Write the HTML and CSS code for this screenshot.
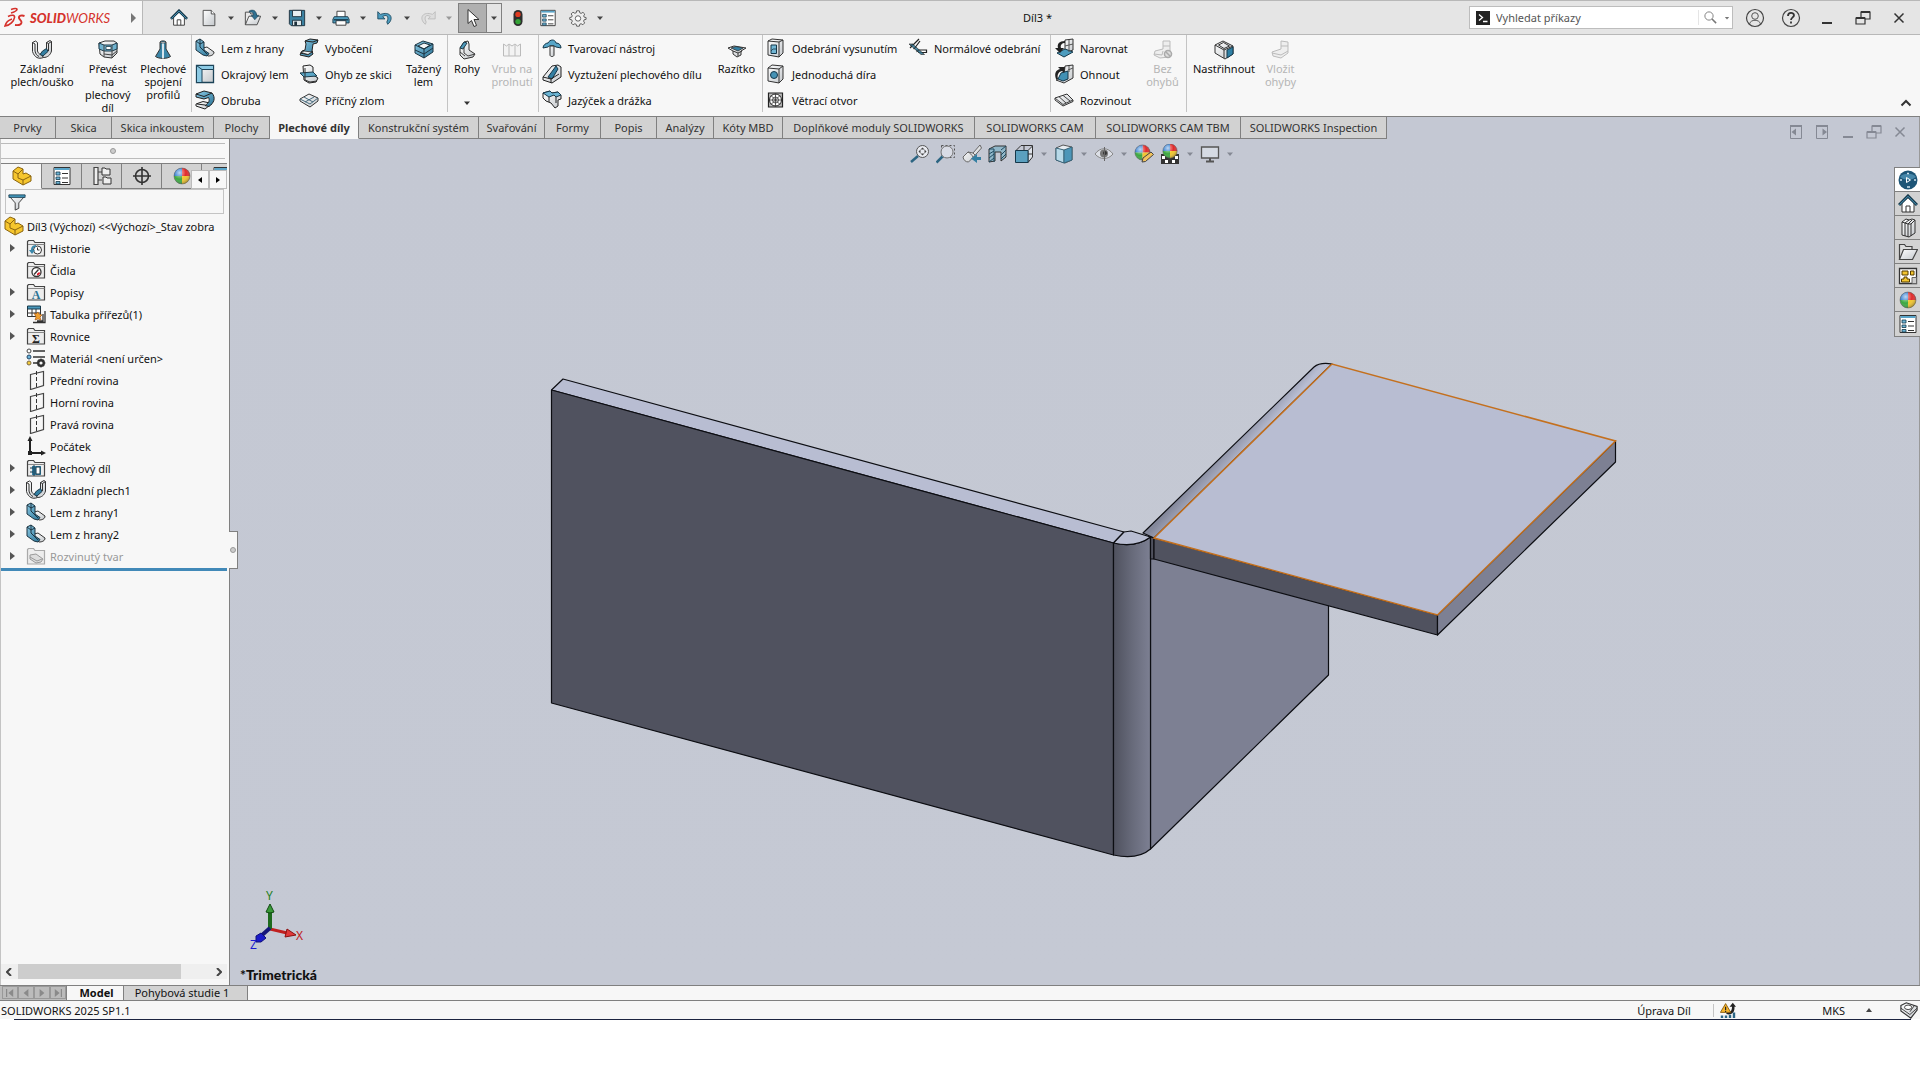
FILE: index.html
```html
<!DOCTYPE html>
<html lang="cs">
<head>
<meta charset="utf-8">
<title>SOLIDWORKS – Díl3</title>
<link rel="stylesheet" href="styles.css">
</head>
<body>
<svg class="defs" aria-hidden="true">
  <defs>
    <linearGradient id="g-teal" x1="0" y1="0" x2="1" y2="1"><stop offset="0" stop-color="#8ccbe6"/><stop offset="1" stop-color="#2a7396"/></linearGradient>
    <linearGradient id="g-grey" x1="0" y1="0" x2="1" y2="1"><stop offset="0" stop-color="#fff"/><stop offset="1" stop-color="#c4c8cc"/></linearGradient>
    <linearGradient id="g-cyl" x1="0" x2="1"><stop offset="0" stop-color="#4f515e"/><stop offset=".5" stop-color="#676a7a"/><stop offset="1" stop-color="#7d8093"/></linearGradient>
    <linearGradient id="g-bend" gradientUnits="userSpaceOnUse" x1="1226" y1="444" x2="1242" y2="458"><stop offset="0" stop-color="#83879a"/><stop offset="1" stop-color="#b8bdd2"/></linearGradient>
    <radialGradient id="g-ball" cx=".35" cy=".3" r=".8"><stop offset="0" stop-color="#fff" stop-opacity=".7"/><stop offset=".5" stop-color="#fff" stop-opacity="0"/><stop offset="1" stop-color="#000" stop-opacity=".45"/></radialGradient>
  </defs>
  <symbol id="i-arrow" viewBox="0 0 14 14"><path d="M4 5.500h6L7 9z" fill="currentColor"/></symbol>
  <symbol id="i-home" viewBox="0 0 20 20"><path d="M4 9v9h12V9l-6-5.500z" fill="#fff" stroke="#333"/><path d="M1 11l9-9 9 9" fill="none" stroke="#16384a" stroke-width="3"/><path d="M1.500 10.800l8.500-8.500 8.500 8.500" fill="none" stroke="#4d9cc0" stroke-width="1"/><path d="M8 18v-6h4v6" fill="none" stroke="#333"/></symbol>
  <symbol id="i-new" viewBox="0 0 20 20"><path d="M3.500 1.500h9l4 4v13h-13z" fill="url(#g-grey)" stroke="#444"/><path d="M12.500 1.500v4h4" fill="#fff" stroke="#444"/></symbol>
  <symbol id="i-open" viewBox="0 0 20 20"><path d="M1.500 17.500v-14h5l1 2h6v3" fill="#e8e8e8" stroke="#444"/><path d="M1.500 17.500l4-9.500h13l-4 9.500z" fill="url(#g-grey)" stroke="#444"/><path d="M6 2c4-2 8 0 8 5h2.500L12 12 8 7h2.500C10.500 4 9 3 6 3.500z" fill="#2f7090" stroke="#16384a" stroke-width=".6"/></symbol>
  <symbol id="i-save" viewBox="0 0 20 20"><path d="M1.500 1.500h17v17h-15l-2-2z" fill="#3b81a1" stroke="#1d2f3a"/><path d="M5 1.500h10v7H5z" fill="#e8eef1" stroke="#1d2f3a"/><path d="M5 12.500h10v6H5z" fill="#dfe7ea" stroke="#1d2f3a"/><path d="M7 14h3v4.500H7z" fill="#1d2f3a"/></symbol>
  <symbol id="i-print" viewBox="0 0 20 20"><path d="M5.500 9V2.500h9V9" fill="#fff" stroke="#333"/><path d="M2.500 8.500h15l1.500 3v4H1v-4z" fill="#4e9cbd" stroke="#1d3a4a"/><path d="M4.500 13h11v5h-11z" fill="#fff" stroke="#333"/><path d="M2 12h16" stroke="#16384a" stroke-width="1.500"/></symbol>
  <symbol id="i-undo" viewBox="0 0 20 20"><path d="M2 3v8h8L7.500 8.500C11 5.500 15.500 8 12 14.500l1 2.500c8-7 2.500-15-8-11z" fill="#4d9dc0" stroke="#1d4a60"/></symbol>
  <symbol id="i-redo" viewBox="0 0 20 20"><path d="M18 3v8h-8l2.500-2.500C9 5.500 4.500 8 8 14.500L7 17C-1 10 4.500 2 15 6z" fill="#ddd" stroke="#bbb"/></symbol>
  <symbol id="i-cursor" viewBox="0 0 20 20"><path d="M5 1.500v14l3.500-3 2.500 6 2.500-1-2.500-6h5z" fill="#fff" stroke="#333"/></symbol>
  <symbol id="i-traffic" viewBox="0 0 20 20"><rect x="5" y="1" width="10" height="18" rx="5" fill="#2e2e2e"/><circle cx="10" cy="6" r="3" fill="#e03a20"/><circle cx="10" cy="14" r="3" fill="#34a336"/></symbol>
  <symbol id="i-list" viewBox="0 0 20 20"><path d="M2 1.500h16v17H2z" fill="#fff" stroke="#333"/><path d="M2.500 2h15v2h-15z" fill="#5aa5c9"/><path d="M4 6h4v3H4zm0 5h4v2.500H4zm0 4.500h4V18H4z" fill="#6db5d6" stroke="#16384a" stroke-width=".8"/><path d="M10 7.500h6M10 12h6M10 16.500h6" stroke="#333"/></symbol>
  <symbol id="i-gear" viewBox="0 0 20 20"><path d="M8.500 2h3l.5 2.300 1.500.6 2-1.200 2 2-1.200 2 .6 1.400L19 9.500v2l-2.200.5-.6 1.500 1.200 2-2 2-2-1.200-1.400.6-.5 2.200h-3L8 17l-1.500-.6-2 1.200-2-2 1.200-2L3 12l-2.200-.5v-2L3 9l.6-1.500-1.200-2 2-2 2 1.200L8 4.300z" fill="#eee" stroke="#555"/><circle cx="10" cy="10.500" r="3" fill="#fff" stroke="#555"/></symbol>
  <symbol id="i-search" viewBox="0 0 20 20"><circle cx="8" cy="8" r="5.500" fill="none" stroke="#777" stroke-width="1.200"/><path d="M12 12l5.500 5.500" stroke="#777" stroke-width="2"/></symbol>
  <symbol id="i-prompt" viewBox="0 0 14 14"><path d="M0 0h14v14H0z" fill="#222"/><path d="M3 3.500l3.500 3L3 9.500M7 10.500h4.500" fill="none" stroke="#fff" stroke-width="1.300"/></symbol>
  <symbol id="i-user" viewBox="0 0 20 20"><circle cx="10" cy="10" r="8.500" fill="none" stroke="#444" stroke-width="1.200"/><circle cx="10" cy="8" r="3.300" fill="none" stroke="#555"/><path d="M4.500 16c1-5 10-5 11 0" fill="none" stroke="#555"/></symbol>
  <symbol id="i-help" viewBox="0 0 20 20"><circle cx="10" cy="10" r="8.500" fill="none" stroke="#444" stroke-width="1.200"/><path d="M7 8c0-4 6-4 6-.7 0 2-3 2.200-3 4.700M10 13.500v2" fill="none" stroke="#333" stroke-width="1.800"/></symbol>
  <symbol id="i-min" viewBox="0 0 20 20"><path d="M5 15h10" stroke="currentColor" stroke-width="2"/></symbol>
  <symbol id="i-restore" viewBox="0 0 20 20"><path d="M8 9V4h9v7h-5M3 10h9v6H3z" fill="none" stroke="currentColor" stroke-width="1.200"/><path d="M8 4h9M3 10h9" stroke="currentColor" stroke-width="2"/></symbol>
  <symbol id="i-close" viewBox="0 0 20 20"><path d="M5.500 5.500l9 9m0-9l-9 9" stroke="currentColor" stroke-width="1.500"/></symbol>
  <symbol id="i-dockl" viewBox="0 0 20 20"><path d="M4.500 3.500h11v13h-11z" fill="none" stroke="currentColor"/><path d="M4 3h12v2H4zM10 6.500v7L5.500 10z" fill="currentColor"/></symbol>
  <symbol id="i-dockr" viewBox="0 0 20 20"><path d="M4.500 3.500h11v13h-11z" fill="none" stroke="currentColor"/><path d="M4 3h12v2H4zM10.500 6.500v7L15 10z" fill="currentColor"/></symbol>
  <!-- sheet metal commands -->
  <symbol id="i-base" viewBox="0 0 20 20"><path d="M.5 2.500L3.500 1l2 1.500v8.500c1 3 2.500 3.500 4 3l2 3.500c-5 2-9 0-11-6z" fill="url(#g-grey)" stroke="#333"/><path d="M14.500 2.500L18 .5l1.500 1V11c-1 4-4 6.500-8 6.500L10 15c2.500-1 4-2 4.500-4z" fill="url(#g-grey)" stroke="#333"/><path d="M.5 2.500L3 4v7c.6 3 2 4.500 4 5.500M16.500 3.500V11M14.500 2.500l2 1 3-2" fill="none" stroke="#333"/><path d="M10.500 11l4-2.500 1.500 3-5 4.500-3-1.500z" fill="#347fa2" stroke="#1c3a4a"/></symbol>
  <symbol id="i-convert" viewBox="0 0 20 20"><path d="M1 3l6-2h9l3 2v10l-5 5-8-1-4-3z" fill="url(#g-grey)" stroke="#333"/><path d="M1 3l5 2h8l5-2v6l-5 2H6l-5-2z" fill="#6fb2cf" stroke="#1c3a4a"/><path d="M8 6.500h5v3H8z" fill="#fff" stroke="#1c3a4a" stroke-width=".8"/><path d="M6 5v12M14 5v13M6 14l8 1 5-4" fill="none" stroke="#444"/></symbol>
  <symbol id="i-loft" viewBox="0 0 20 20"><path d="M7 2c1-1.500 5-1.500 6 0v7l4.500 7.500c-3 2.500-12 2.500-15 0L7 9z" fill="#3c86a8" stroke="#333"/><path d="M7 2c1 1.500 5 1.500 6 0" fill="#eee" stroke="#333" stroke-width=".8"/><path d="M10 3.500v15" stroke="#d8e6ee" stroke-width="2"/></symbol>
  <symbol id="i-edge" viewBox="0 0 20 20"><path d="M8 10l4-1 7 5c0 3-3 4-6 4l-5-4z" fill="url(#g-grey)" stroke="#333"/><path d="M1 3l4-2 4 3v8l5 3.500-2 2.500-4-1-7-5z" fill="url(#g-teal)" stroke="#1c3340"/><path d="M5 1v8l7 7M1 3l4 3 4-2" fill="none" stroke="#1c3340"/></symbol>
  <symbol id="i-miter" viewBox="0 0 20 20"><path d="M1.500 1.500h17v17h-17z" fill="url(#g-grey)" stroke="#1c4358" stroke-width="1.300"/><path d="M1.500 1.500h17v4H7v13H1.500z" fill="#8ccae4" stroke="#1c4358"/><path d="M1.500 1.500L7 5.500" stroke="#1c4358"/></symbol>
  <symbol id="i-hem" viewBox="0 0 20 20"><path d="M1 14l7-2.500 9 2-7 5.500-9-3z" fill="url(#g-grey)" stroke="#222"/><path d="M1 4l8-3 8 2c4 5 2 10-3 13.500l-4-1c4-2.500 5-5 3.500-8L9 9 1 7z" fill="url(#g-teal)" stroke="#222"/><path d="M1 4l8 2.500 8-3.500M10 15l-8-1" fill="none" stroke="#222"/></symbol>
  <symbol id="i-jog" viewBox="0 0 20 20"><path d="M6 3l5-2 8 1-1 3-4 1-1 7 1 3-4 3-9-2 2-4 3-1 1-6z" fill="url(#g-teal)" stroke="#222"/><path d="M6 3l8 1 5-2M1 15l8 1.500 5-3.500" fill="none" stroke="#222"/><path d="M2 14.500l3-1.500 8 1-4 2.500z" fill="#f0f2f3" stroke="#222" stroke-width=".8"/></symbol>
  <symbol id="i-sketched" viewBox="0 0 20 20"><path d="M4 2l7-1 3 2v8l5 3-2 4-7 1-5-3z" fill="url(#g-grey)" stroke="#222"/><path d="M1 9l13-1 4 4-13 1z" fill="#5ba6c6" stroke="#1c3a4a"/><path d="M6 4v12l5 2 7-1" fill="none" stroke="#333"/></symbol>
  <symbol id="i-cross" viewBox="0 0 20 20"><path d="M1 9l9-5 9 4v3l-8 6-10-6z" fill="url(#g-grey)" stroke="#333"/><path d="M1 9l10 5 8-6M5 7l9 5M15 7l-9 5" fill="none" stroke="#476b7d"/></symbol>
  <symbol id="i-swept" viewBox="0 0 20 20"><path d="M1 5l8-4 10 3v8l-9 6-9-5z" fill="url(#g-teal)" stroke="#1c3340"/><path d="M4 6l6-3 6 2-6 4z" fill="#f4f6f7" stroke="#1c3340"/><path d="M1 5l9 4 9-5M10 9v9M1 10l9 4 9-6" fill="none" stroke="#1c3340"/></symbol>
  <symbol id="i-corner" viewBox="0 0 20 20"><path d="M3 8l4-6 4-1 1 3v6l6 4-2 3-9 2-4-4z" fill="url(#g-grey)" stroke="#333"/><path d="M3 8l4-6 3 1-4 6z" fill="#4c99bb" stroke="#1c3a4a"/><path d="M7 7v6l4 3 7-2M3 12l5 4" fill="none" stroke="#444"/></symbol>
  <symbol id="i-notch" viewBox="0 0 20 20"><path d="M1.500 4l3 2 2.500-2 3 2 3-2 2.500 2 3-2v12h-17zM7 5v11M13 5v11" fill="#f3f3f3" stroke="#bbb"/></symbol>
  <symbol id="i-form" viewBox="0 0 20 20"><path d="M1 10c0-3 3-5 5-5 2-4 7-4 8 0 3 0 5 2 5 5l-5-1c-3-2-6-2-8 0z" fill="#58a6c8" stroke="#16384a"/><path d="M8 8h4v9c0 2-4 2-4 0z" fill="url(#g-grey)" stroke="#333"/></symbol>
  <symbol id="i-gusset" viewBox="0 0 20 20"><path d="M1 13l9-11 6-1 3 2v10l-9 6-9-3z" fill="url(#g-grey)" stroke="#222"/><path d="M6 13L14 2l2 3-6 10z" fill="#347fa2" stroke="#16384a"/><path d="M1 13l8 2 8-5M9 15v4" fill="none" stroke="#222"/></symbol>
  <symbol id="i-tab" viewBox="0 0 20 20"><path d="M1 3l7-2 2 2 6-1 3 3v4l-3 1v6l-3 2-4-5-5-2-3-3z" fill="url(#g-grey)" stroke="#222"/><path d="M1 3l7-2 2 2 6-1 3 3-5 2-2-2-5 2z" fill="#6bb4d3" stroke="#16384a"/><path d="M7 7v5M14 7v6" stroke="#222"/></symbol>
  <symbol id="i-stamp" viewBox="0 0 20 20"><path d="M1 8l6-2 12 2-5 3v4l-4 2-4-3v-3z" fill="url(#g-grey)" stroke="#333"/><path d="M4 8l5-1.500 7 1.500-5 3z" fill="#347fa2" stroke="#333" stroke-width=".8"/><path d="M6 11l5 2 4-2M11 13v3" fill="none" stroke="#333"/></symbol>
  <symbol id="i-cut" viewBox="0 0 20 20"><path d="M2 3l4-2 11 1v13l-4 4-11-2z" fill="url(#g-grey)" stroke="#333"/><path d="M2 3l11 1v15M13 4l4-2" fill="none" stroke="#333"/><path d="M5 7h5.500v8.500H5z" fill="#71b6d4" stroke="#16384a"/><path d="M5 13l2-2h3.500" fill="none" stroke="#16384a" stroke-width=".8"/></symbol>
  <symbol id="i-hole" viewBox="0 0 20 20"><path d="M2 4l4-3 11 1v13l-4 4-11-2z" fill="url(#g-grey)" stroke="#333"/><path d="M2 4l11 1v14M13 5l4-3" fill="none" stroke="#333"/><circle cx="8" cy="11" r="3.500" fill="#4592b5" stroke="#16384a"/></symbol>
  <symbol id="i-vent" viewBox="0 0 20 20"><path d="M2.500 3h14v14h-14z" fill="#bbb" stroke="#222" stroke-width="1.200"/><circle cx="9.500" cy="10" r="6" fill="#fff" stroke="#222"/><circle cx="9.500" cy="10" r="3" fill="none" stroke="#333" stroke-width=".8"/><path d="M9.500 3.500v13M3 10h13M5 5.500l9 9M14 5.500l-9 9" stroke="#333" stroke-width=".8"/></symbol>
  <symbol id="i-normal" viewBox="0 0 20 20"><path d="M2 10L11 1M6 11l6-8M9 12h9.500v2.500H11z" fill="#fff" stroke="#222" stroke-width="1.200"/><path d="M1 6h3.500l12 10.500H13z" fill="#2f7594" opacity=".85"/><path d="M1 6h3.500l12 10.500H13zM5 6l-3 2M8 9l-3 2M11 12l-3 2" fill="none" stroke="#222" stroke-width=".6"/></symbol>
  <symbol id="i-unfold" viewBox="0 0 20 20"><path d="M11 2l8-1v11l-8 3z" fill="url(#g-grey)" stroke="#333"/><path d="M3 15l8-4 8 3-9 5z" fill="#4d9cbe" stroke="#16384a"/><path d="M11 3C5 3 3 6 4 10H1l5 5 4-5H7c-1-3 1-5 4-5z" fill="#222"/><path d="M15 2v12M11 8l8-2" stroke="#555"/></symbol>
  <symbol id="i-fold" viewBox="0 0 20 20"><path d="M11 2l8-1v13l-9 5-8-3 8-4z" fill="url(#g-grey)" stroke="#333"/><path d="M7 9l7-2v8l-5 2-5-2z" fill="#4190b4" stroke="#16384a"/><path d="M15 2v6M14 6l5-2" stroke="#555"/><path d="M2 15C0 9 2 6 6 5L4 3l7 0-1 6-2-2c-4 1-5 4-4 8z" fill="#222"/></symbol>
  <symbol id="i-flat" viewBox="0 0 20 20"><path d="M1 8l12-4 6 6v1.500L9 16 1 10z" fill="url(#g-grey)" stroke="#333"/><path d="M1 8l8 6.500L19 10M5 6.700l7 6.300M9 5.400l7 5.600" fill="none" stroke="#444"/></symbol>
  <symbol id="i-nobend" viewBox="0 0 20 20"><path d="M10 1h7v10l2 3-3 3-9 1-6-3 1-4 8-2z" fill="#eee" stroke="#bbb"/><path d="M10 6h7M1 14l8 1 1-4" fill="none" stroke="#bbb"/><circle cx="15" cy="14" r="3.500" fill="#ddd" stroke="#aaa" stroke-width="1.500"/><path d="M12.500 11.500l5 5" stroke="#aaa" stroke-width="1.500"/></symbol>
  <symbol id="i-insbend" viewBox="0 0 20 20"><path d="M10 1l7 1v11l-7 5-8-2-1-4 9-3z" fill="#eee" stroke="#bbb"/><path d="M10 6h7M1 13l9 2 7-4" fill="none" stroke="#bbb"/></symbol>
  <symbol id="i-rip" viewBox="0 0 20 20"><path d="M1 5l8-4 10 5v8l-8 5-10-6z" fill="url(#g-grey)" stroke="#333"/><path d="M1 5l9 5 9-4M4.500 5l5-2.500 6 3.500-5.500 2.500zM10 10v8" fill="none" stroke="#333"/><path d="M13 10l6-3v7l-6 4z" fill="#2f80a5" stroke="#16384a"/></symbol>
  <!-- view commands -->
  <symbol id="i-zfit" viewBox="0 0 20 20"><circle cx="12.500" cy="7.500" r="6" fill="#e8eaf0" stroke="#555"/><path d="M8.500 7.500l2-2v4zM16.500 7.500l-2-2v4zM12.500 3.500l-2 2h4zM12.500 11.500l-2-2h4z" fill="#444"/><path d="M8 12l-7 6" stroke="#2c6582" stroke-width="2.500"/></symbol>
  <symbol id="i-zarea" viewBox="0 0 20 20"><path d="M5.500 1.500h13v12h-13z" fill="none" stroke="#555" stroke-dasharray="2 2"/><circle cx="11" cy="8" r="6" fill="#d9dce5" stroke="#777"/><path d="M6.500 12.500l-6 6" stroke="#2c6582" stroke-width="2.500"/></symbol>
  <symbol id="i-prev" viewBox="0 0 20 20"><path d="M1 13l5-5 5 1 7-8 1.500 3-8 9-5 5c-3 0-5-2-5.500-5z" fill="url(#g-grey)" stroke="#666"/><path d="M6 8c2 1 4 3 5 5M11 9l2 2" fill="none" stroke="#666"/><path d="M19 13h-4v-3l-6 4.500 6 4.500v-3h4z" fill="#347fa2"/></symbol>
  <symbol id="i-section" viewBox="0 0 20 20"><path d="M1 5l6-3h11v11l-5 4V8H7v9l-6 1z" fill="#91b7c9" stroke="#333"/><path d="M1 5h5v13M13 6l5-4M1 10l5-3M1 14l5-4M1 18l5-4M13 11l5-5M13 15l5-5" fill="none" stroke="#1f4a60"/></symbol>
  <symbol id="i-orient" viewBox="0 0 20 20"><path d="M7 1.500h11.500V13L14 18.500V6.500L18.500 2M7 1.500L2 6.500" fill="#dfe3ea" stroke="#333"/><path d="M1.500 6.500H14v12H1.500z" fill="#5ba0bf" stroke="#16384a"/><path d="M10 1v5M14 10h5" stroke="#333"/></symbol>
  <symbol id="i-style" viewBox="0 0 20 20"><path d="M2 4l7-3 9 2v13l-7 3-9-3z" fill="#e7ecf1" stroke="#555"/><path d="M2 4l8 2v13l-8-3z" fill="#b8d9e8" stroke="#386479"/><path d="M10 6l8-3v13l-8 3z" fill="#4c96b8" stroke="#386479"/></symbol>
  <symbol id="i-eye" viewBox="0 0 20 20"><path d="M1 10c5-7 13-7 18 0-5 6-13 6-18 0z" fill="#dcdfe6" stroke="#888"/><circle cx="10" cy="9.500" r="4" fill="#777"/><circle cx="11" cy="9" r="2" fill="#333"/><path d="M10.500 3v14" stroke="#666"/></symbol>
  <symbol id="i-ball" viewBox="0 0 20 20"><path d="M10 10V2a8 8 0 0 1 8 8z" fill="#e02a2a"/><path d="M10 10H2a8 8 0 0 1 8-8z" fill="#2878d0"/><path d="M10 10v8a8 8 0 0 1-8-8z" fill="#3ba840"/><path d="M10 10h8a8 8 0 0 1-8 8z" fill="#f2c62c"/><circle cx="10" cy="10" r="8" fill="url(#g-ball)" stroke="#555" stroke-width=".5"/></symbol>
  <symbol id="i-appear" viewBox="0 0 20 20"><use href="#i-ball" x="-1" y="-1" width="19" height="19"/><path d="M8 18l1-4 8-6 2.500 2.500-8 7z" fill="#f1c25b" stroke="#444"/></symbol>
  <symbol id="i-scene" viewBox="0 0 20 20"><path d="M1 10h18v10H1z" fill="#333"/><path d="M2 12h3v3H2zm13 0h3v3h-3zm-10 4h3v3H5zm7 0h3v3h-3z" fill="#fff"/><use href="#i-ball" x="1" y="-2" width="18" height="18"/></symbol>
  <symbol id="i-monitor" viewBox="0 0 20 20"><path d="M1.500 3h17v11h-17z" fill="#d5dae3" stroke="#555" stroke-width="1.300"/><path d="M10 14v3M6 17.500h8" stroke="#555" stroke-width="2"/></symbol>
  <!-- panel and tree -->
  <symbol id="i-part" viewBox="0 0 20 20"><path d="M1 5l5-4 5 2v5l3-1 5 3v5l-8 4-10-6z" fill="#f6c62e" stroke="#8a6410"/><path d="M1 5l5 3v4l5 2v5M6 8l5-5M11 14l8-4" fill="none" stroke="#8a6410"/></symbol>
  <symbol id="i-config" viewBox="0 0 20 20"><path d="M2 1.500h4v17H2zM6 6h4M6 14h4" fill="#eee" stroke="#444" stroke-width="1.200"/><path d="M10 2h3l1 1h4v6h-8zM11 11h3l1 1h4v6h-8z" fill="#eee" stroke="#333"/></symbol>
  <symbol id="i-target" viewBox="0 0 20 20"><circle cx="10" cy="10" r="6.500" fill="none" stroke="#333" stroke-width="1.600"/><path d="M10 1v18M1 10h18" stroke="#333" stroke-width="1.600"/></symbol>
  <symbol id="i-filter" viewBox="0 0 20 20"><path d="M1 3h18l-7 8v6l-4 2v-8z" fill="url(#g-grey)" stroke="#333"/><path d="M1 2h18v3H1z" fill="#3f8fb3" stroke="#16384a" stroke-width=".8"/></symbol>
  <symbol id="i-folder" viewBox="0 0 20 20"><path d="M1.500 18V3.500l1-1h5l1.500 2h9.500V18z" fill="#ededed" stroke="#444" stroke-width="1.200"/><path d="M2 6.500h16.500" stroke="#888"/></symbol>
  <symbol id="i-history" viewBox="0 0 20 20"><use href="#i-folder"/><circle cx="11.500" cy="12" r="4" fill="#fff" stroke="#333"/><path d="M11.500 9.500V12h2" fill="none" stroke="#333"/><path d="M10 7c-4 0-5 3-5 5H3l3 4 3-4H7c0-2 1-3 3-3z" fill="#3a87aa"/></symbol>
  <symbol id="i-sensor" viewBox="0 0 20 20"><use href="#i-folder"/><circle cx="10.500" cy="12" r="4.500" fill="#fff" stroke="#333" stroke-width="1.300"/><path d="M8 14.500l4.500-5" stroke="#333" stroke-width="1.300"/><path d="M11 14.500a3 3 0 0 0 2.500-2" fill="none" stroke="#d12" stroke-width="2"/></symbol>
  <symbol id="i-cutlist" viewBox="0 0 20 20"><path d="M1.500 2.500h13v10h-13zM6 3v9M10 3v9M2 9h12" fill="#fff" stroke="#333"/><path d="M1.500 2h13v3h-13z" fill="#4a98bb" stroke="#16384a"/><path d="M19 7v11.500H7M17 10v7h-6" fill="none" stroke="#333" stroke-width="1.300"/><path d="M8 9l2 1 2-2 1 2 3 1-2 2 1 3-3-1-3 1 1-3z" fill="#f0a030" stroke="#a05010" stroke-width=".6"/></symbol>
  <symbol id="i-material" viewBox="0 0 20 20"><path d="M7 3h12M7 9h12M7 15h5" stroke="#333" stroke-width="1.500"/><circle cx="3" cy="3" r="2" fill="#fff" stroke="#444"/><circle cx="3" cy="9" r="2" fill="#6bb4d9" stroke="#246"/><circle cx="3" cy="15" r="2" fill="#f3cb3c" stroke="#764"/><circle cx="15" cy="15" r="2.800" fill="none" stroke="#333" stroke-width="2.400"/><path d="M15 10.500v9M10.500 15h9M12 12l6 6M18 12l-6 6" stroke="#333" stroke-width="1.200" stroke-dasharray="2 5 2"/></symbol>
  <symbol id="i-plane" viewBox="0 0 20 20"><path d="M4.500 4.500l13-3v14l-13 4z" fill="none" stroke="#444" stroke-width="1.200"/><path d="M10.500 1v18" stroke="#333" stroke-dasharray="4 2"/></symbol>
  <symbol id="i-origin" viewBox="0 0 20 20"><path d="M4 5v12h11" fill="none" stroke="#222" stroke-width="2"/><path d="M4 0l2.500 5h-5zM20 17l-5 2.500v-5zM2 15h4v4H2z" fill="#222"/></symbol>
  <symbol id="i-sheet" viewBox="0 0 20 20"><use href="#i-folder"/><path d="M6 8h9v9H6z" fill="#347fa2"/><path d="M10 9h4v7h-4z" fill="#fff" stroke="#16384a"/><path d="M4 10h3M4 14h3M8 7v11" stroke="#16384a"/></symbol>
  <symbol id="i-flatpat" viewBox="0 0 20 20"><path d="M1.500 18V3.500l1-1h5l1.500 2h9.500V18z" fill="#ededed" stroke="#aaa" stroke-width="1.200"/><path d="M4 9l6-1 7 5-2 3-5 1-6-4z" fill="#ddd" stroke="#999"/><path d="M4 11l7 4 5-2" fill="none" stroke="#999"/></symbol>
  <!-- task pane -->
  <symbol id="i-compass" viewBox="0 0 20 20"><circle cx="10" cy="10" r="9.500" fill="#1d5577"/><path d="M2 7a9 6 0 0 1 16 0 12 12 0 0 1-16 0z" fill="#4687aa"/><path d="M8.500 7.500v5l4-2.500z" fill="none" stroke="#fff"/><path d="M9 3.500h2M9 17h3M3 9v2M17 9v2" stroke="#cfe2ee" stroke-width="1.500"/></symbol>
  <symbol id="i-books" viewBox="0 0 20 20"><path d="M4 4l4-3 3 1 3-1 3 1v13l-6 4-7-2z" fill="url(#g-grey)" stroke="#333"/><path d="M4 4l3 1v13M7 5l4-3M7 5l3 1v13M10 6l4-4M13 6v12M10 6l3 0 4-4" fill="none" stroke="#333"/></symbol>
  <symbol id="i-folder2" viewBox="0 0 20 20"><path d="M1.500 17.500v-15h5l1.500 2h6v3" fill="#ddd" stroke="#444" stroke-width="1.200"/><path d="M1.500 17.500l4-10h14l-5 10z" fill="url(#g-grey)" stroke="#444" stroke-width="1.200"/></symbol>
  <symbol id="i-palette" viewBox="0 0 20 20"><path d="M1.500 2.500h17v15h-17z" fill="#fff" stroke="#333" stroke-width="1.300"/><path d="M4 5h6v4H4zM12.500 5H16v4h-3.500zM6 11h3v2h2.500v3H3.500v-3H6z" fill="#f3c52f" stroke="#553c00"/><path d="M14 11.500h4.500v6H14z" fill="#ccc" stroke="#666"/></symbol>
  <symbol id="i-rebuild" viewBox="0 0 20 20"><path d="M8 13c5 1 7-2 7-7h-3l4-5 4 5h-2c1 8-5 11-10 9z" fill="#222"/><path d="M7 2l6.500 11H.5z" fill="#f5b52c" stroke="#7a4c00"/><path d="M7 6v4M7 11v1.500" stroke="#222" stroke-width="1.500"/><path d="M1 17h3v3H1zm5 0h3v3H6zm5-1h3v4h-3zm5-3h3v7h-3z" fill="#2c6685"/></symbol>
  <symbol id="i-tag" viewBox="0 0 20 20"><path d="M1 5l6-3 12 4v4l-7 9-11-8z" fill="url(#g-grey)" stroke="#333" stroke-width="1.300"/><ellipse cx="9" cy="7" rx="4" ry="2.500" fill="#fff" stroke="#333"/><path d="M1 8l10 7 8-7M16 5l-5 7" fill="none" stroke="#333"/></symbol>
</svg>

<header class="titlebar">
  <div class="brand">
    <svg class="brand-mark" viewBox="0 0 22 22"><path d="M7 2.500c3-1 6-1.500 6 0 0 1.200-3 2.500-6 3.500" fill="none" stroke="#d5322c" stroke-width="1.600"/><path d="M4 9.500c4-2 7-1.500 6.500 1C10 14 6 18.500 1 19c1-4 3.500-6 7-7" fill="none" stroke="#d5322c" stroke-width="1.600"/><path d="M20.500 9c-2.500-1-6-.5-5.500 2 .3 1.700 2.800 2.500 2.500 4.500-.4 2.300-4 2.800-6.500 2.500" fill="none" stroke="#d5322c" stroke-width="1.900"/></svg>
    <span class="brand-name"><b>SOLID</b>WORKS</span>
    <svg class="brand-arrow" viewBox="0 0 6 10"><path d="M0 0l5 5-5 5z" fill="#777"/></svg>
  </div>
  <nav class="quick">
    <button class="qbtn home" aria-label="Domů"><svg><use href="#i-home"/></svg></button>
    <div class="split"><button class="qbtn" aria-label="Nový"><svg><use href="#i-new"/></svg></button><button class="qarr" aria-label="Možnosti"><svg><use href="#i-arrow"/></svg></button></div>
    <div class="split"><button class="qbtn" aria-label="Otevřít"><svg><use href="#i-open"/></svg></button><button class="qarr" aria-label="Možnosti"><svg><use href="#i-arrow"/></svg></button></div>
    <div class="split"><button class="qbtn" aria-label="Uložit"><svg><use href="#i-save"/></svg></button><button class="qarr" aria-label="Možnosti"><svg><use href="#i-arrow"/></svg></button></div>
    <div class="split"><button class="qbtn" aria-label="Tisk"><svg><use href="#i-print"/></svg></button><button class="qarr" aria-label="Možnosti"><svg><use href="#i-arrow"/></svg></button></div>
    <div class="split"><button class="qbtn" aria-label="Zpět"><svg><use href="#i-undo"/></svg></button><button class="qarr" aria-label="Možnosti"><svg><use href="#i-arrow"/></svg></button></div>
    <div class="split off"><button class="qbtn" aria-label="Znovu"><svg><use href="#i-redo"/></svg></button><button class="qarr" aria-label="Možnosti"><svg><use href="#i-arrow"/></svg></button></div>
    <div class="select-tool"><button class="on" aria-label="Vybrat"><svg><use href="#i-cursor"/></svg></button><button class="drop" aria-label="Možnosti"><svg><use href="#i-arrow"/></svg></button></div>
    <button class="qbtn spaced" aria-label="Přestavět"><svg><use href="#i-traffic"/></svg></button>
    <button class="qbtn spaced" aria-label="Vlastnosti"><svg><use href="#i-list"/></svg></button>
    <button class="qbtn" aria-label="Nastavení"><svg><use href="#i-gear"/></svg></button>
    <button class="qarr" aria-label="Možnosti"><svg><use href="#i-arrow"/></svg></button>
  </nav>
  <h1 class="doc-title">Díl3 *</h1>
  <label class="search">
    <svg class="prompt"><use href="#i-prompt"/></svg>
    <input type="text" placeholder="Vyhledat příkazy" aria-label="Vyhledat příkazy">
    <svg class="glass"><use href="#i-search"/></svg>
    <svg class="tri"><use href="#i-arrow"/></svg>
  </label>
  <div class="winbtns">
    <button aria-label="Účet"><svg><use href="#i-user"/></svg></button>
    <button aria-label="Nápověda"><svg><use href="#i-help"/></svg></button>
    <button aria-label="Minimalizovat"><svg><use href="#i-min"/></svg></button>
    <button aria-label="Obnovit"><svg><use href="#i-restore"/></svg></button>
    <button aria-label="Zavřít"><svg><use href="#i-close"/></svg></button>
  </div>
</header>

<section class="ribbon">
  <div class="group g1">
    <button class="big"><svg><use href="#i-base"/></svg>Základní<br>plech/ouško</button>
    <button class="big"><svg><use href="#i-convert"/></svg>Převést<br>na<br>plechový<br>díl</button>
    <button class="big"><svg><use href="#i-loft"/></svg>Plechové<br>spojení<br>profilů</button>
  </div>
  <div class="group g2">
    <div class="stack">
      <button><svg><use href="#i-edge"/></svg>Lem z hrany</button>
      <button><svg><use href="#i-miter"/></svg>Okrajový lem</button>
      <button><svg><use href="#i-hem"/></svg>Obruba</button>
    </div>
    <div class="stack">
      <button><svg><use href="#i-jog"/></svg>Vybočení</button>
      <button><svg><use href="#i-sketched"/></svg>Ohyb ze skici</button>
      <button><svg><use href="#i-cross"/></svg>Příčný zlom</button>
    </div>
    <button class="big"><svg><use href="#i-swept"/></svg>Tažený<br>lem</button>
  </div>
  <div class="group g3">
    <button class="big"><svg><use href="#i-corner"/></svg>Rohy<svg class="more"><use href="#i-arrow"/></svg></button>
    <button class="big" disabled><svg><use href="#i-notch"/></svg>Vrub na<br>prolnutí</button>
  </div>
  <div class="group g4">
    <div class="stack">
      <button><svg><use href="#i-form"/></svg>Tvarovací nástroj</button>
      <button><svg><use href="#i-gusset"/></svg>Vyztužení plechového dílu</button>
      <button><svg><use href="#i-tab"/></svg>Jazýček a drážka</button>
    </div>
    <button class="big"><svg><use href="#i-stamp"/></svg>Razítko</button>
  </div>
  <div class="group g5">
    <div class="stack">
      <button><svg><use href="#i-cut"/></svg>Odebrání vysunutím</button>
      <button><svg><use href="#i-hole"/></svg>Jednoduchá díra</button>
      <button><svg><use href="#i-vent"/></svg>Větrací otvor</button>
    </div>
    <div class="stack">
      <button><svg><use href="#i-normal"/></svg>Normálové odebrání</button>
    </div>
  </div>
  <div class="group g6">
    <div class="stack">
      <button><svg><use href="#i-unfold"/></svg>Narovnat</button>
      <button><svg><use href="#i-fold"/></svg>Ohnout</button>
      <button><svg><use href="#i-flat"/></svg>Rozvinout</button>
    </div>
    <button class="big" disabled><svg><use href="#i-nobend"/></svg>Bez<br>ohybů</button>
  </div>
  <div class="group g7">
    <button class="big"><svg><use href="#i-rip"/></svg>Nastřihnout</button>
    <button class="big" disabled><svg><use href="#i-insbend"/></svg>Vložit<br>ohyby</button>
  </div>
  <button class="collapse" aria-label="Sbalit"><svg viewBox="0 0 12 8"><path d="M1.500 6.500L6 2l4.500 4.500" fill="none" stroke="#333" stroke-width="2"/></svg></button>
</section>

<div class="tabrow">
  <nav class="cmdtabs">
    <button>Prvky</button><button>Skica</button><button>Skica inkoustem</button><button>Plochy</button><button class="active">Plechové díly</button><button>Konstrukční systém</button><button>Svařování</button><button>Formy</button><button>Popis</button><button>Analýzy</button><button>Kóty MBD</button><button>Doplňkové moduly SOLIDWORKS</button><button>SOLIDWORKS CAM</button><button>SOLIDWORKS CAM TBM</button><button>SOLIDWORKS Inspection</button>
  </nav>
  <div class="docbtns">
    <button aria-label="Panel vlevo"><svg><use href="#i-dockl"/></svg></button>
    <button aria-label="Panel vpravo"><svg><use href="#i-dockr"/></svg></button>
    <button aria-label="Minimalizovat dokument"><svg><use href="#i-min"/></svg></button>
    <button aria-label="Obnovit dokument"><svg><use href="#i-restore"/></svg></button>
    <button aria-label="Zavřít dokument"><svg><use href="#i-close"/></svg></button>
  </div>
</div>

<main class="workspace">
  <aside class="panel">
    <div class="grip"><i class="dot"></i></div>
    <nav class="ptabs">
      <button class="active" aria-label="Strom prvků"><svg><use href="#i-part"/></svg></button>
      <button aria-label="Vlastnosti"><svg><use href="#i-list"/></svg></button>
      <button aria-label="Konfigurace"><svg><use href="#i-config"/></svg></button>
      <button aria-label="Kóty"><svg><use href="#i-target"/></svg></button>
      <button aria-label="Vzhledy"><svg><use href="#i-ball"/></svg></button>
      <button aria-label="CAM"><svg><use href="#i-list"/></svg></button>
      <div class="pscroll"><button aria-label="Vlevo"><svg viewBox="0 0 4 6"><path d="M4 0v6L0 3z"/></svg></button><button aria-label="Vpravo"><svg viewBox="0 0 4 6"><path d="M0 0v6l4-3z"/></svg></button></div>
    </nav>
    <label class="filter"><svg><use href="#i-filter"/></svg><input type="text" aria-label="Filtr"></label>
    <div class="root"><svg><use href="#i-part"/></svg><span>Díl3 (Výchozí) &lt;&lt;Výchozí&gt;_Stav zobra</span></div>
    <ul class="tree">
      <li class="has"><svg><use href="#i-history"/></svg>Historie</li>
      <li><svg><use href="#i-sensor"/></svg>Čidla</li>
      <li class="has"><svg viewBox="0 0 20 20"><use href="#i-folder"/><text x="10" y="17" class="glyph glyph-blue">A</text></svg>Popisy</li>
      <li class="has"><svg><use href="#i-cutlist"/></svg>Tabulka přířezů(1)</li>
      <li class="has"><svg viewBox="0 0 20 20"><use href="#i-folder"/><text x="10" y="17" class="glyph">Σ</text></svg>Rovnice</li>
      <li><svg><use href="#i-material"/></svg>Materiál &lt;není určen&gt;</li>
      <li><svg><use href="#i-plane"/></svg>Přední rovina</li>
      <li><svg><use href="#i-plane"/></svg>Horní rovina</li>
      <li><svg><use href="#i-plane"/></svg>Pravá rovina</li>
      <li><svg><use href="#i-origin"/></svg>Počátek</li>
      <li class="has"><svg><use href="#i-sheet"/></svg>Plechový díl</li>
      <li class="has"><svg><use href="#i-base"/></svg>Základní plech1</li>
      <li class="has"><svg><use href="#i-edge"/></svg>Lem z hrany1</li>
      <li class="has"><svg><use href="#i-edge"/></svg>Lem z hrany2</li>
      <li class="has muted"><svg><use href="#i-flatpat"/></svg>Rozvinutý tvar</li>
    </ul>
    <div class="hscroll">
      <svg viewBox="0 0 6 8"><path d="M5 0L1 4l4 4" fill="none" stroke="#444" stroke-width="2"/></svg>
      <div class="track"><div class="thumb"></div></div>
      <svg viewBox="0 0 6 8"><path d="M1 0l4 4-4 4" fill="none" stroke="#444" stroke-width="2"/></svg>
    </div>
    <button class="handle" aria-label="Skrýt panel"><i class="dot"></i></button>
  </aside>

  <section class="viewport">
    <svg class="model" viewBox="230 139 1689 846" role="img" aria-label="Model plechového dílu">
      <g stroke="#0c0d12" stroke-width="1.200" stroke-linejoin="round">
        <path d="M1150.500 540L1328.500 600V675L1150.500 849z" fill="#7d8093"/>
        <path d="M551.500 390L563 379L1124 532L1113.500 543z" fill="#b8bdd2"/>
        <path d="M551.500 390L1113.500 543V855L551.500 703z" fill="#50525f"/>
        <path d="M1113.500 543Q1136 548 1150.500 537V849Q1138 860 1113.500 855z" fill="url(#g-cyl)"/>
        <path d="M1113.500 543L1124 532L1131 531L1150.500 537Q1136 548 1113.500 543z" fill="#b8bdd2"/>
        <path d="M1143 533L1314 367Q1320 362 1332 364L1154 538z" fill="url(#g-bend)"/>
        <path d="M1150.500 537L1154 538V559H1150.500z" fill="#50525f"/>
        <path d="M1154 538L1437.500 615V635L1154 559z" fill="#50525f"/>
        <path d="M1437.500 615L1615.500 441V462L1437.500 635z" fill="#7d8093"/>
      </g>
      <path d="M1154 538L1332 364L1615.500 441L1437.500 615z" fill="#b8bdd2" stroke="#c4701e" stroke-width="1.500"/>
    </svg>
    <nav class="viewbar">
      <button aria-label="Přizpůsobit"><svg><use href="#i-zfit"/></svg></button>
      <button aria-label="Zvětšit výběr"><svg><use href="#i-zarea"/></svg></button>
      <button aria-label="Předchozí pohled"><svg><use href="#i-prev"/></svg></button>
      <button aria-label="Řez"><svg><use href="#i-section"/></svg></button>
      <button aria-label="Orientace"><svg><use href="#i-orient"/></svg></button>
      <svg class="tri"><use href="#i-arrow"/></svg>
      <button aria-label="Styl zobrazení"><svg><use href="#i-style"/></svg></button>
      <svg class="tri"><use href="#i-arrow"/></svg>
      <button aria-label="Skrýt"><svg><use href="#i-eye"/></svg></button>
      <svg class="tri"><use href="#i-arrow"/></svg>
      <button aria-label="Upravit vzhled"><svg><use href="#i-appear"/></svg></button>
      <button aria-label="Použít scénu"><svg><use href="#i-scene"/></svg></button>
      <svg class="tri"><use href="#i-arrow"/></svg>
      <button aria-label="Nastavení zobrazení"><svg><use href="#i-monitor"/></svg></button>
      <svg class="tri"><use href="#i-arrow"/></svg>
    </nav>
    <div class="corner">
      <svg class="triad" viewBox="0 0 56 62">
        <path d="M20 38l17 4" stroke="#c01f1f" stroke-width="3"/><path d="M37 38l9 6-11 2z" fill="#e03a3a" stroke="#8a1010"/>
        <path d="M20 38V19" stroke="#1d6a1d" stroke-width="4"/><path d="M20 13l4 8q-4 2-8 0z" fill="#3a9a3a" stroke="#124a12"/>
        <path d="M20 37l-9 8" stroke="#16167a" stroke-width="4"/><path d="M11 42l5 5-5 4-5 0v-6z" fill="#1a1ac8" stroke="#10107a"/>
        <text x="16" y="9" fill="#228022">Y</text><text x="46" y="49" fill="#c02020">X</text><text x="0" y="58" fill="#1a1ad0">Z</text>
      </svg>
      <div class="viewname">*Trimetrická</div>
    </div>
    <nav class="taskpane">
      <button class="active" aria-label="3DEXPERIENCE"><svg><use href="#i-compass"/></svg></button>
      <button aria-label="Zdroje"><svg><use href="#i-home"/></svg></button>
      <button aria-label="Knihovna"><svg><use href="#i-books"/></svg></button>
      <button aria-label="Průzkumník"><svg><use href="#i-folder2"/></svg></button>
      <button aria-label="Paleta pohledů"><svg><use href="#i-palette"/></svg></button>
      <button aria-label="Vzhledy, scény"><svg><use href="#i-ball"/></svg></button>
      <button aria-label="Uživatelské vlastnosti"><svg><use href="#i-list"/></svg></button>
    </nav>
  </section>
</main>

<div class="sheettabs">
  <div class="step">
    <button aria-label="První"><svg viewBox="0 0 10 10"><path d="M9 0v10L3 5zM0 0h1.500v10H0z"/></svg></button>
    <button aria-label="Předchozí"><svg viewBox="0 0 10 10"><path d="M8 0v10L2 5z"/></svg></button>
    <button aria-label="Další"><svg viewBox="0 0 10 10"><path d="M2 0v10l6-5z"/></svg></button>
    <button aria-label="Poslední"><svg viewBox="0 0 10 10"><path d="M1 0v10l6-5zM8.500 0H10v10H8.500z"/></svg></button>
  </div>
  <button class="active">Model</button><button class="study">Pohybová studie 1</button>
</div>
<footer class="status">
  <span class="version">SOLIDWORKS 2025 SP1.1</span>
  <span class="mode">Úprava Díl</span>
  <svg class="rebuild"><use href="#i-rebuild"/></svg>
  <button class="units">MKS<svg viewBox="0 0 6 4"><path d="M0 4l3-4 3 4z" fill="#444"/></svg></button>
  <svg class="tag"><use href="#i-tag"/></svg>
</footer>
<div class="baseline"></div>
</body>
</html>
```
FILE: styles.css
```css
* { box-sizing: border-box; }
body {
  margin: 0;
  height: 100vh;
  min-height: 700px;
  padding-bottom: 60px;
  display: flex;
  flex-direction: column;
  overflow: hidden;
  background: #fff;
  color: #111;
  font: 11px/13px "Noto Sans", "Open Sans", sans-serif;
}
button, input { font: inherit; color: inherit; background: none; border: 0; padding: 0; margin: 0; }
button { display: flex; align-items: center; justify-content: center; white-space: nowrap; }
svg { display: block; flex: none; width: 20px; height: 20px; }
.defs { position: absolute; width: 0; height: 0; }
.glyph { font: bold 12px "Liberation Serif", serif; text-anchor: middle; fill: #222; }
.glyph-blue { fill: #2b7395; }
.dot { width: 6px; height: 6px; border: 1px solid #999; border-radius: 50%; background: #ccc; }

/* title bar */
.titlebar { flex: none; display: flex; height: 35px; background: #e5e5e5; border-top: 1px solid #b8b8b8; border-bottom: 1px solid #b8b8b8; }
.brand { display: flex; align-items: center; width: 143px; padding-left: 4px; background: #f7f7f7; border-right: 1px solid #b8b8b8; color: #d5322c; }
.brand-mark { width: 22px; height: 22px; margin-right: 4px; }
.brand-name { font: italic 13px/16px "Noto Sans", sans-serif; width: 101px; }
.brand-name { font-family: Lato, sans-serif; }
.brand-name b { font-weight: 900; }
.brand-arrow { width: 6px; height: 10px; }
.quick { display: flex; align-items: center; padding-left: 24px; color: #444; }
.qbtn { width: 24px; height: 24px; }
.qbtn svg { width: 18px; height: 18px; }
.qarr { width: 20px; height: 24px; }
.qarr svg, .drop svg { width: 14px; height: 14px; }
.home, .spaced { margin-right: 6px; }
.split { display: flex; width: 44px; }
.off { width: 41px; color: #999; }
.select-tool { display: flex; height: 30px; width: 44px; margin-right: 4px; border: 1px solid #808080; }
.select-tool .on { width: 30px; background: #b0b0b0; border-right: 1px solid #808080; }
.select-tool .drop { flex: 1; }
.doc-title { flex: 1; margin: 0; padding-right: 4px; font: inherit; line-height: 34px; text-align: center; }
.search { display: flex; align-items: center; width: 264px; height: 23px; margin: 5px 4px 0 0; padding-left: 6px; background: #fff; border: 1px solid #bdbdbd; }
.prompt { width: 14px; height: 14px; }
.search input { flex: 1; min-width: 0; height: 20px; padding-left: 6px; }
.search input::placeholder { color: #555; opacity: 1; }
.glass { width: 24px; height: 15px; border-left: 1px solid #e5e5e5; }
.search .tri { width: 10px; height: 14px; color: #777; }
.winbtns { display: flex; align-items: center; padding-right: 3px; color: #333; }
.winbtns button { width: 36px; height: 30px; }

/* ribbon */
.ribbon { flex: none; display: flex; height: 82px; background: #f7f7f7; border-bottom: 1px solid #808080; }
.group { display: flex; margin-bottom: 4px; border-right: 1px solid #c4c4c4; }
.g1 { width: 192px; padding-left: 4px; }
.g2 { width: 256px; }
.g3 { width: 91px; }
.g4 { width: 224px; }
.g5 { width: 288px; }
.g6 { width: 136px; }
.g7 { width: 113px; border-right: 0; }
.big { flex-direction: column; justify-content: flex-start; flex: 1; padding-top: 5px; text-align: center; }
.big svg { margin-bottom: 2px; }
.big:disabled { color: #b5b5b5; }
.big .more { width: 14px; height: 14px; margin: 21px 0 0; color: #333; }
.g1 .big:first-child { flex: 0 0 76px; }
.g3 .big:first-child { flex: 0 0 38px; }
.g7 .big:first-child { flex: 0 0 74px; }
.stack { padding-left: 3px; }
.stack button { height: 26px; gap: 6px; justify-content: flex-start; }
.g2 .stack { width: 104px; }
.g4 .stack { width: 172px; }
.g5 .stack { width: 142px; }
.g6 .stack { width: 88px; }
.collapse { margin: 59px 8px 0 auto; width: 12px; height: 18px; }
.collapse svg { width: 12px; height: 8px; }

/* command tabs */
.tabrow { flex: none; display: flex; justify-content: space-between; height: 22px; background: #c4c8d3; border-right: 1px solid #999; }
.cmdtabs { display: grid; grid-template-columns: 56px 56px 102px 56px 89px 120px 66px 56px 56px 57px 69px 192px 121px 145px 146px; }
.cmdtabs button { background: #d2d2d2; border-right: 1px solid #808080; border-bottom: 1px solid #808080; color: #333; }
.cmdtabs .active { background: #f7f7f7; border-bottom-color: #f7f7f7; font-weight: 700; box-shadow: 0 -1px #f7f7f7; }
.docbtns { display: flex; gap: 6px; padding: 5px 9px 0 0; color: #858994; }
.docbtns button { width: 20px; height: 20px; }

/* feature panel */
.workspace { flex: 1; display: flex; min-height: 0; }
.panel { position: relative; flex: none; display: flex; flex-direction: column; width: 230px; background: #f7f7f7; border-right: 1px solid #808080; border-left: 1px solid #c4c4c4; z-index: 1; }
.grip { display: flex; align-items: center; justify-content: center; height: 16px; margin: 4px 4px 4px 0; border-top: 1px solid #bbb; border-bottom: 1px solid #bbb; }
.ptabs { position: relative; display: flex; height: 26px; margin-right: 2px; padding-left: 1px; border-top: 1px solid #808080; overflow: hidden; }
.ptabs > button { flex: none; width: 40px; background: #d2d2d2; border-right: 1px solid #808080; border-bottom: 1px solid #808080; }
.ptabs > button.active { background: #f7f7f7; border-bottom-color: #f7f7f7; }
.ptabs > button svg { width: 20px; height: 20px; }
.pscroll { position: absolute; right: 0; bottom: 0; display: flex; }
.pscroll button { width: 18px; height: 19px; background: #f7f7f7; border: 1px solid #bbb; }
.pscroll button svg { width: 4px; height: 6px; }
.filter { display: flex; align-items: center; height: 25px; margin: 0 5px 0 4px; border: 1px solid #c4c4c4; }
.filter svg { width: 18px; height: 18px; margin-left: 2px; }
.filter input { flex: 1; min-width: 0; }
.root, .tree li { display: flex; align-items: center; height: 22px; white-space: nowrap; }
.root { margin: 1px 2px 0 3px; overflow: hidden; gap: 3px; }
.tree { list-style: none; margin: 0 2px 0 0; padding: 0 0 0 25px; height: 334px; border-bottom: 3px solid #4189b8; }
.tree li { gap: 4px; position: relative; }
.tree .has::before { content: ""; position: absolute; left: -16px; border: 4px solid transparent; border-left: 5px solid #555; border-right: 0; }
.tree .muted { color: #999; }
.hscroll { display: flex; align-items: center; height: 15px; margin: auto 2px 6px 0; padding: 0 5px; gap: 6px; background: #efefef; }
.hscroll svg { width: 6px; height: 8px; }
.track { flex: 1; height: 15px; }
.thumb { width: 85%; height: 15px; background: #cdcdcd; }
.handle { position: absolute; left: 228px; top: 392px; width: 9px; height: 38px; background: #f7f7f7; border: 1px solid #808080; border-left: 0; }

/* graphics area */
.viewport { position: relative; flex: 1; min-width: 0; background: linear-gradient(180deg, #c4c8d3, #c5c9d4); border-right: 1px solid #999; }
.model { position: absolute; inset: 0; width: 100%; height: 100%; }
.viewbar { position: relative; display: flex; justify-content: center; padding-top: 5px; margin-right: 6px; }
.viewbar button { width: 26px; height: 20px; }
.viewbar .tri { width: 14px; color: #858994; }
.corner { position: absolute; left: 10px; bottom: 2px; }
.triad { width: 56px; height: 62px; margin: 0 0 14px 10px; font: 12px "Noto Sans", sans-serif; }
.viewname { font: 900 14px/16px Lato, sans-serif; }
.taskpane { position: absolute; right: -1px; top: 28px; width: 26px; border: 1px solid #808080; border-right: 0; background: #d2d2d2; }
.taskpane button { width: 25px; height: 24px; border-bottom: 1px solid #808080; }
.taskpane button:last-child { border-bottom: 0; }
.taskpane .active { background: #fff; }

/* bottom bars */
.sheettabs { flex: none; display: flex; height: 16px; background: #f7f7f7; border-top: 1px solid #808080; border-bottom: 1px solid #808080; }
.sheettabs button { height: 13px; }
.step { display: flex; width: 67px; padding-left: 2px; background: #bbb; border-right: 1px solid #808080; }
.step button { width: 16px; border: 1px solid #999; }
.step svg { width: 8px; height: 8px; fill: #8a8a8a; }
.sheettabs > .active { width: 56px; padding-left: 3px; font-weight: 700; }
.sheettabs > .study { width: 125px; height: 14px; background: #d2d2d2; border: solid #808080; border-width: 0 1px; padding: 0 7px 1px 0; }
.status { flex: none; display: flex; align-items: center; height: 18px; padding: 0 1px; background: #f7f7f7; }
.version { flex: 1; }
.mode { width: 77px; border-right: 1px solid #c4c4c4; }
.rebuild { width: 16px; height: 16px; margin: 0 86px 0 6px; }
.units { gap: 21px; margin-right: 27px; }
.units svg { width: 6px; height: 4px; }
.tag { width: 20px; height: 18px; }
.baseline { flex: none; height: 1px; margin: 0 9px 0 14px; background: #1c2440; }
```
